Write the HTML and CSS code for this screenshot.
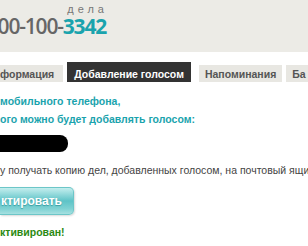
FILE: index.html
```html
<!DOCTYPE html>
<html lang="ru">
  <head>
    <meta charset="UTF-8" />
    <title>Добавление голосом</title>
    <link rel="stylesheet" href="styles.css">
  </head>
  <body>
    <div class="header">
      <div class="phone">
        <span class="phone-label">дела</span>
        <span class="phone-num">00-100-<b>3342</b></span>
      </div>
    </div>

    <div class="tabs">
      <div class="tab tab-first">формация</div>
      <div class="tab active">Добавление голосом</div>
      <div class="tab">Напоминания</div>
      <div class="tab tab-last">Ба</div>
    </div>

    <div class="content">
      <p class="hint">мобильного телефона,</p>
      <p class="hint">ого можно будет добавлять голосом:</p>
      <div class="redacted"></div>
      <p class="note">у получать копию дел, добавленных голосом, на почтовый ящик</p>
      <button class="btn" type="button">ктировать</button>
      <p class="status">ктивирован!</p>
    </div>
  </body>
</html>
```

FILE: styles.css
```css
body {
  margin: 0;
  padding: 0;
  width: 308px;
  height: 246px;
  overflow: hidden;
  background-color: #fff;
  font-family: "Liberation Sans", Arial, sans-serif;
}
.header {
  background-color: #ecebe6;
  height: 52px;
}
.phone {
  display: flex;
  flex-direction: column;
  align-items: flex-end;
  width: 106px;
  padding-top: 3px;
}
.phone-label {
  font-size: 11px;
  letter-spacing: 4px;
  color: #777;
  line-height: 12px;
  margin-right: -2px;
}
.phone-num {
  font-family: "Open Sans", sans-serif;
  font-size: 21px;
  font-weight: 600;
  letter-spacing: -1.2px;
  color: #666;
  line-height: 21px;
  margin-top: 1px;
  white-space: nowrap;
}
.phone-num b {
  color: #1aa3ad;
  font-weight: 700;
}
.tabs {
  display: flex;
  align-items: flex-end;
  gap: 4px;
  height: 30px;
  white-space: nowrap;
}
.tab {
  flex: none;
  background-color: #e8e7e2;
  color: #555;
  font-size: 10.5px;
  font-weight: bold;
  padding: 0 6px;
  height: 17px;
  line-height: 18px;
}
.tab-first {
  padding-left: 0;
  padding-right: 9px;
}
.active {
  background-color: #333;
  color: #fff;
  height: 20px;
  line-height: 24px;
  padding: 0 7px;
  margin-right: 4px;
}
.content {
  padding-top: 10px;
}
.hint {
  margin: 0;
  font-size: 10.5px;
  font-weight: bold;
  color: #1aa3ad;
  line-height: 18px;
  white-space: nowrap;
}
.redacted {
  width: 68px;
  height: 17px;
  background-color: #000;
  border-radius: 0 8px 8px 0;
  margin-top: 7px;
}
.note {
  margin: 9px 0 0;
  font-size: 10.5px;
  color: #444;
  line-height: 18px;
  white-space: nowrap;
}
.btn {
  display: block;
  margin-top: 8px;
  width: 74px;
  height: 28px;
  border: 1px solid #6cc6c8;
  border-left: none;
  border-radius: 0 5px 5px 0;
  background: linear-gradient(#c4eeee, #5ec3c7 50%, #7fd2d3 80%, #a6e0e0);
  box-shadow: 1px 1px 2px rgba(0, 0, 0, 0.15);
  color: #fff;
  font-family: "Liberation Sans", Arial, sans-serif;
  font-size: 12px;
  font-weight: bold;
  text-align: right;
  padding: 0 11px 0 0;
  text-shadow: 0 1px 1px #3a9ea2;
}
.status {
  margin: 8px 0 0;
  font-size: 10.5px;
  font-weight: bold;
  color: #2b8a12;
  line-height: 18px;
}
```
